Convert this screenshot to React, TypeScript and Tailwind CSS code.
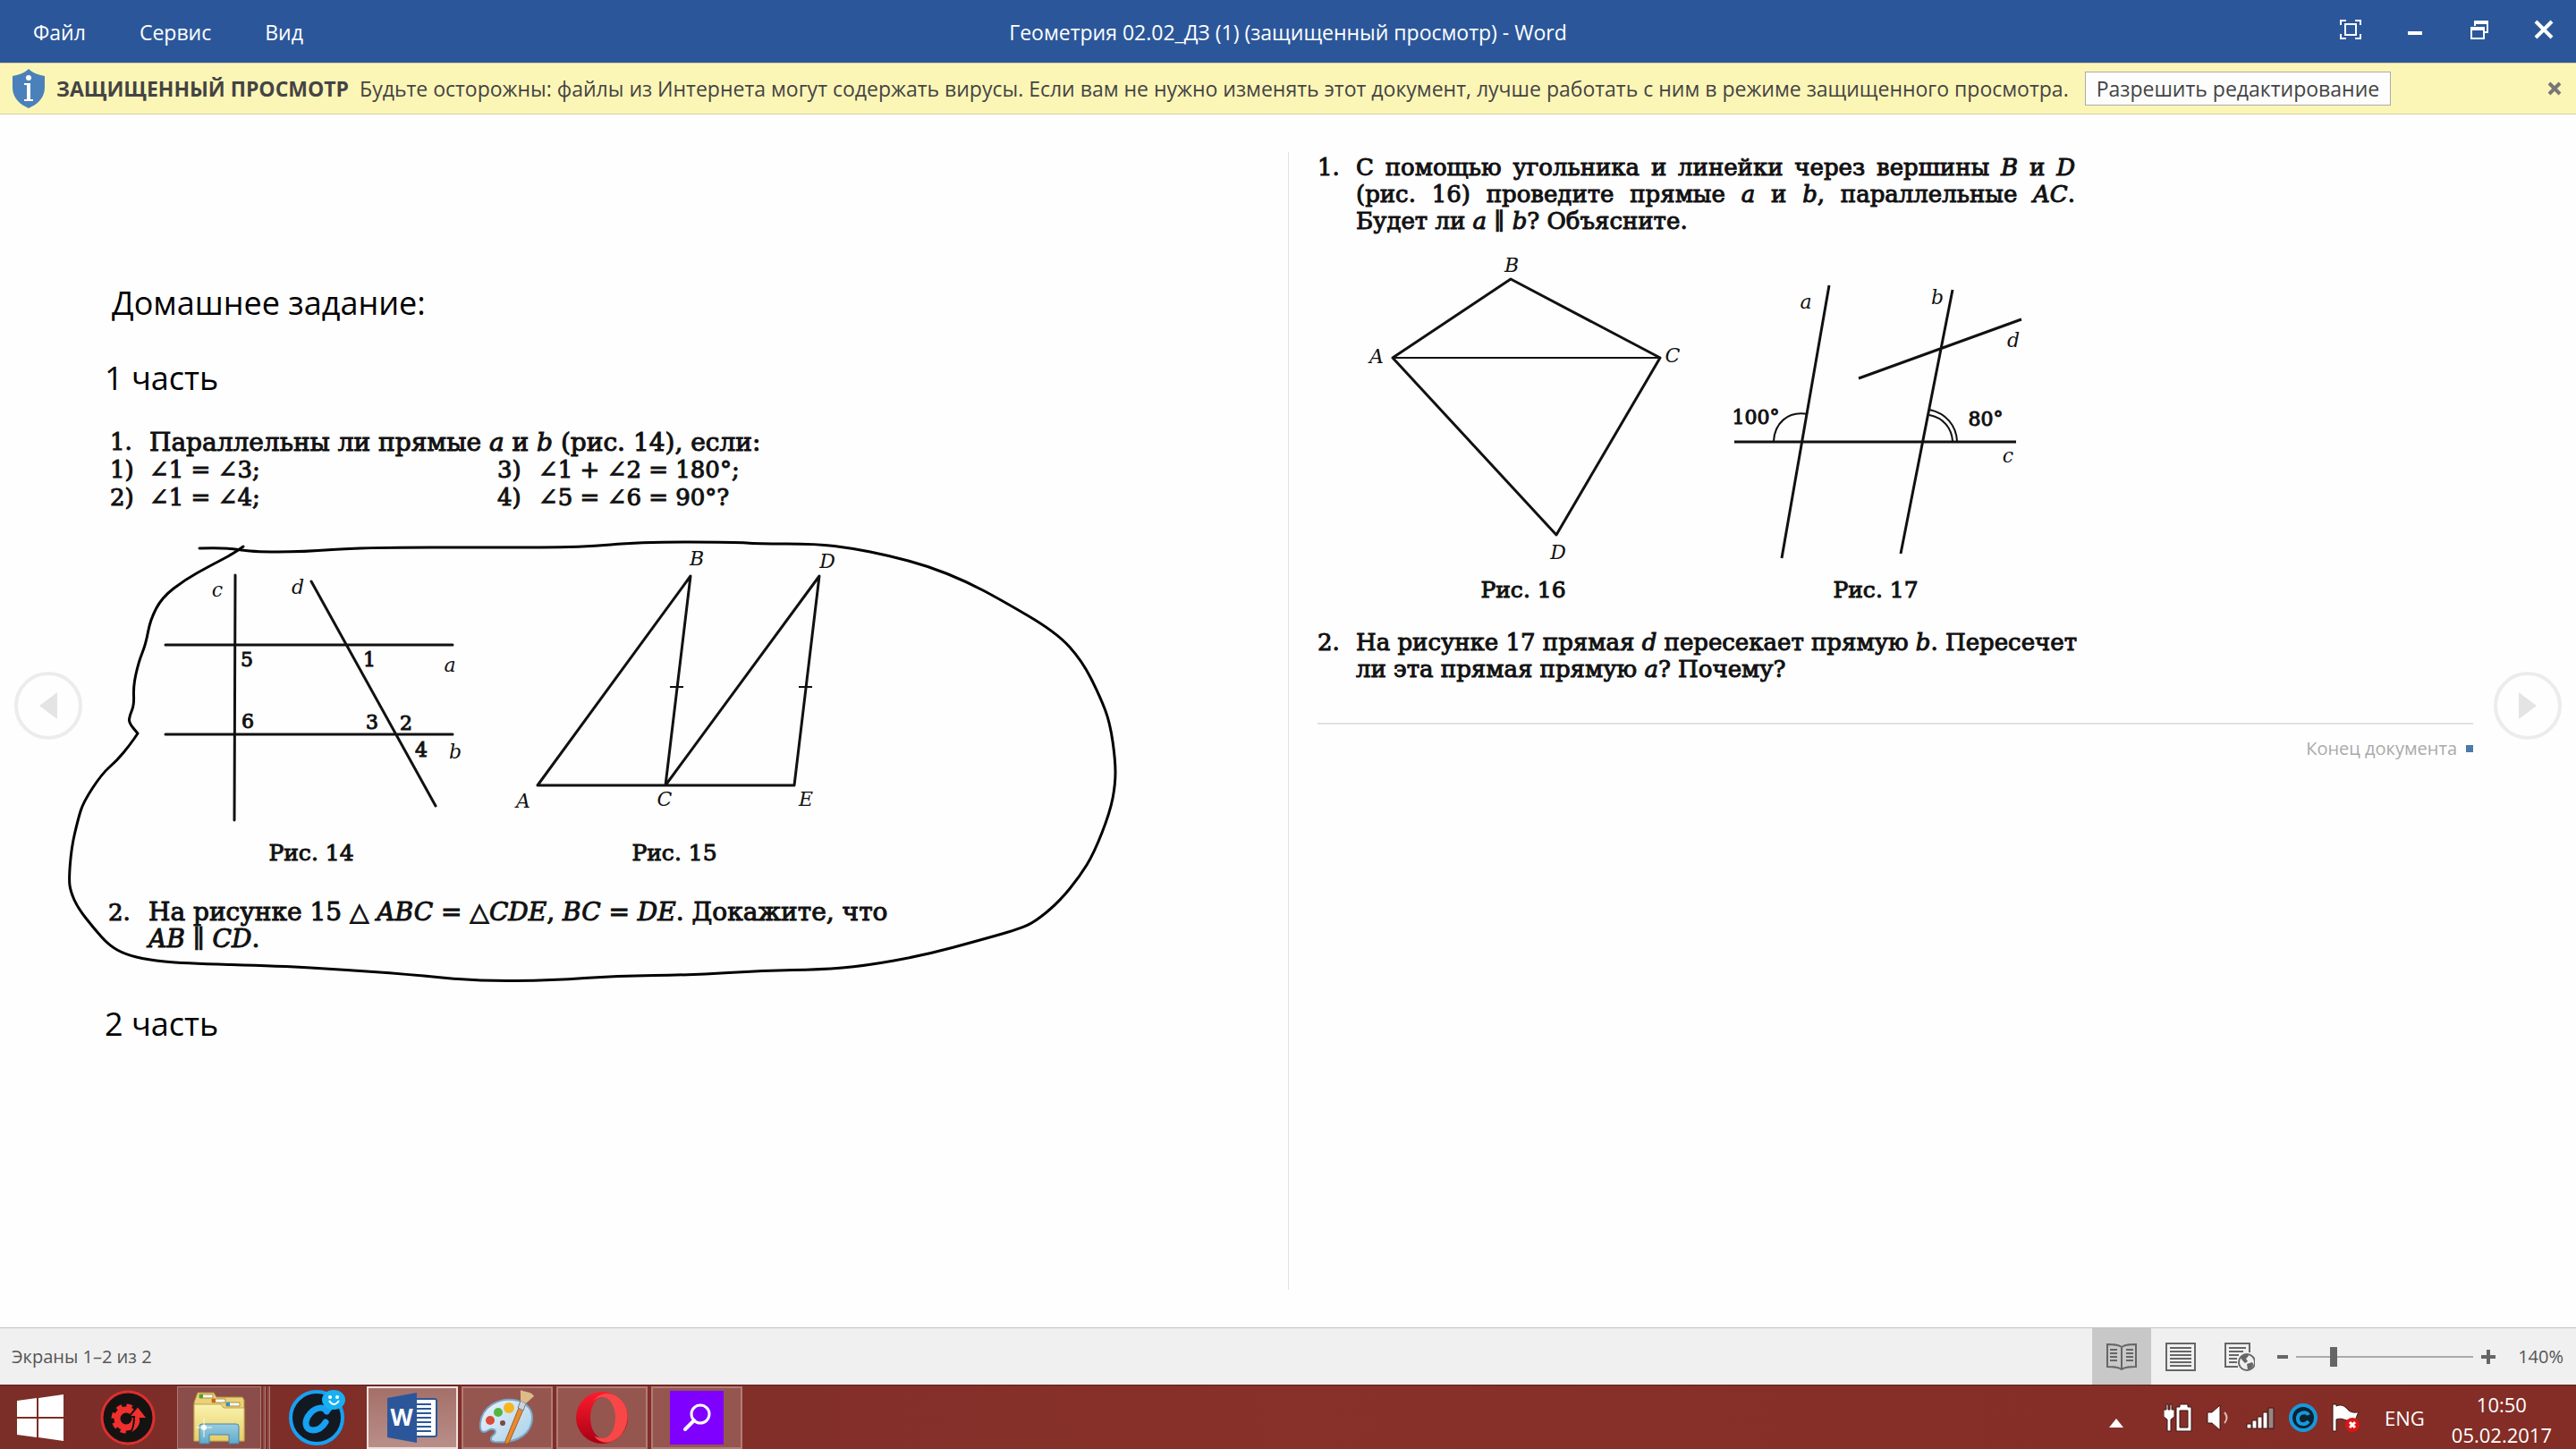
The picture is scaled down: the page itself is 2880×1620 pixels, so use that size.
import type { ReactNode } from "react";

type Point = [number, number];

interface LabelProps {
  x: number;
  y: number;
  children: ReactNode;
  upright?: boolean;
}

const MENU = ["Файл", "Сервис", "Вид"];

// outline drawn by hand over the first page
const INK: Point[] = [
  [223, 613], [252, 612], [281, 617], [339, 617], [404, 612], [560, 612], [649, 612], [716, 606],
  [823, 606], [846, 608], [913, 608], [953, 613], [993, 621], [1038, 633], [1080, 650], [1118, 670],
  [1181, 707], [1210, 739], [1230, 779], [1241, 808], [1247, 850], [1247, 877], [1241, 908],
  [1223, 954], [1207, 980], [1185, 1007], [1163, 1026], [1145, 1037], [1096, 1051], [1033, 1068],
  [966, 1080], [917, 1084], [855, 1085], [774, 1090], [689, 1091], [618, 1096], [535, 1097],
  [453, 1089], [381, 1084], [314, 1080], [203, 1077], [165, 1073], [140, 1067], [122, 1057],
  [105, 1038], [87, 1015], [79, 997], [77, 983], [80, 947], [87, 917], [93, 897], [114, 865],
  [131, 850], [145, 833], [154, 820], [154, 820], [144, 808], [145, 800], [150, 788], [149, 767],
  [155, 740], [163, 720], [168, 693], [181, 668], [207, 648], [234, 633], [259, 620], [272, 611],
];

// rounds the corners by running through the middle of each segment
function inkPath(points: Point[]) {
  let d = `M${points[0].join(" ")}`;
  for (let i = 1; i < points.length - 1; i++) {
    const [x, y] = points[i];
    const [nx, ny] = points[i + 1];
    d += `Q${x} ${y} ${(x + nx) / 2} ${(y + ny) / 2}`;
  }
  return `${d}L${points[points.length - 1].join(" ")}`;
}

function Label({ x, y, children, upright }: LabelProps) {
  return (
    <text
      x={x}
      y={y}
      textAnchor="middle"
      stroke={upright ? "#111" : "none"}
      strokeWidth="1"
      className={`fill-[#111] font-['DejaVu_Serif',serif] text-[22px] ${upright ? "" : "italic"}`}
    >
      {children}
    </text>
  );
}

function Figure({ caption, children }: { caption: string; children: ReactNode }) {
  return (
    <figure className="flex flex-col items-center">
      {children}
      <figcaption className="text-[25px] leading-[30px] [-webkit-text-stroke:1px]">{caption}</figcaption>
    </figure>
  );
}

function Figure14() {
  return (
    <svg width="360" height="330" viewBox="168 609 360 330" stroke="#111" strokeWidth="3" fill="none" strokeLinecap="round">
      <path d="M263 643 262 917M185 721H506M185 821H506M348 650 487 901" />
      <Label x={243} y={667}>c</Label>
      <Label x={333} y={664}>d</Label>
      <Label x={503} y={751}>a</Label>
      <Label x={509} y={848}>b</Label>
      <Label x={276} y={745} upright>5</Label>
      <Label x={413} y={745} upright>1</Label>
      <Label x={277} y={814} upright>6</Label>
      <Label x={416} y={815} upright>3</Label>
      <Label x={454} y={816} upright>2</Label>
      <Label x={471} y={846} upright>4</Label>
    </svg>
  );
}

function Figure15() {
  return (
    <svg width="372" height="330" viewBox="568 609 372 330" stroke="#111" strokeWidth="3" fill="none" strokeLinejoin="round">
      <path d="M744 878 772 644 601 878H888L916 644 744 878" />
      <path d="M749 768H764M893 768H908" strokeWidth="2" />
      <Label x={779} y={632}>B</Label>
      <Label x={925} y={635}>D</Label>
      <Label x={585} y={903}>A</Label>
      <Label x={743} y={901}>C</Label>
      <Label x={901} y={901}>E</Label>
    </svg>
  );
}

function Figure16() {
  return (
    <svg width="360" height="365" viewBox="1523 280 360 365" stroke="#111" strokeWidth="3" fill="none" strokeLinejoin="round">
      <path d="M1557 400 1689 312 1856 400 1740 598Z" />
      <path d="M1557 400H1856" strokeWidth="2" />
      <Label x={1690} y={304}>B</Label>
      <Label x={1539} y={406}>A</Label>
      <Label x={1870} y={405}>C</Label>
      <Label x={1742} y={625}>D</Label>
    </svg>
  );
}

function Figure17() {
  return (
    <svg width="340" height="365" viewBox="1927 280 340 365" stroke="#111" strokeWidth="3" fill="none">
      <path d="M2045 319 1992 624M2183 324 2125 619M2078 423 2260 357M1939 494H2254" />
      <path d="M1983 493C1984 474 1998 459 2021 463M2157 458C2176 462 2187 476 2188 493M2157 464C2173 467 2182 479 2183 493" strokeWidth="2" />
      <Label x={2019} y={345}>a</Label>
      <Label x={2166} y={340}>b</Label>
      <Label x={2251} y={388}>d</Label>
      <Label x={2245} y={517}>c</Label>
      <Label x={1963} y={474} upright>100°</Label>
      <Label x={2220} y={476} upright>80°</Label>
    </svg>
  );
}

function TitleBar() {
  return (
    <header className="grid h-[70px] grid-cols-[1fr_auto_1fr] items-center bg-[#2b579a] text-[23px] leading-[30px] text-white">
      <nav className="flex gap-[60px] pl-[37px] pt-[2px]">
        {MENU.map((m) => (
          <button key={m}>{m}</button>
        ))}
      </nav>
      <h1 className="pt-[2px]">Геометрия 02.02_ДЗ (1) (защищенный просмотр) - Word</h1>
      <div className="flex items-center justify-end gap-12 pb-1 pr-6">
        <button aria-label="Во весь экран">
          <svg width="24" height="22" viewBox="0 0 24 22" fill="none" stroke="white" strokeWidth="2">
            <path d="M1 6V1H7M17 1H23V6M23 16V21H17M7 21H1V16" />
            <rect x="6" y="5" width="12" height="12" />
          </svg>
        </button>
        <button aria-label="Свернуть">
          <svg width="24" height="22" viewBox="0 0 24 22" fill="white">
            <path d="M4 13H20V17H4z" />
          </svg>
        </button>
        <button aria-label="Восстановить">
          <svg width="24" height="22" viewBox="0 0 24 22" fill="none" stroke="white" strokeWidth="2">
            <path d="M7 7V2H21V14H17" />
            <path d="M6 3H22" strokeWidth="4" />
            <rect x="3" y="9" width="14" height="12" />
            <path d="M2 10H18" strokeWidth="4" />
          </svg>
        </button>
        <button aria-label="Закрыть">
          <svg width="24" height="22" viewBox="0 0 24 22" stroke="white" strokeWidth="4">
            <path d="M3 2 21 20M21 2 3 20" />
          </svg>
        </button>
      </div>
    </header>
  );
}

function ProtectedBar() {
  return (
    <div className="flex h-[58px] items-center border-y border-[#d3cfa0] bg-[#fcf6b6] pl-[13px] pr-4 text-[23px] leading-[30px] text-[#444]">
      <svg width="38" height="44" viewBox="0 0 38 44">
        <path d="M19 0C24 5 31 7 37 8V21C37 33 28 40 19 44 10 40 1 33 1 21V8C7 7 14 5 19 0Z" fill="#4b81ba" />
        <circle cx="19" cy="10" r="3" fill="white" />
        <path d="M14 16H21V34H24V36H14V34H17V18H14Z" fill="white" />
      </svg>
      <strong className="ml-3 whitespace-nowrap">ЗАЩИЩЕННЫЙ ПРОСМОТР</strong>
      <span className="ml-3 whitespace-nowrap">
        Будьте осторожны: файлы из Интернета могут содержать вирусы. Если вам не нужно изменять этот документ, лучше работать с ним в режиме защищенного просмотра.
      </span>
      <button className="ml-[18px] h-[38px] whitespace-nowrap border border-[#ababab] bg-[#fdfdfd] px-3">Разрешить редактирование</button>
      <button aria-label="Закрыть" className="ml-auto">
        <svg width="16" height="16" viewBox="0 0 16 16" stroke="#777" strokeWidth="4">
          <path d="M2 2 14 14M14 2 2 14" />
        </svg>
      </button>
    </div>
  );
}

function LeftPage() {
  return (
    <section className="relative pt-[187px] text-[28px] leading-[30px]">
      <h2 className="pl-[125px] font-['Open_Sans',sans-serif] text-[36px] leading-[48px] text-black">Домашнее задание:</h2>
      <h3 className="mt-9 pl-[117px] font-['Open_Sans',sans-serif] text-[36px] leading-[48px] text-black">1 часть</h3>
      <div className="mt-8 grid grid-cols-[44px_389px_46px_1fr] pl-[123px] text-[26px] leading-[31px] [-webkit-text-stroke:1px]">
        <span>1.</span>
        <p className="col-span-3 text-[28px]">
          Параллельны ли прямые <i>a</i> и <i>b</i> (рис. 14), если:
        </p>
        <span>1)</span>
        <span>∠1 = ∠3;</span>
        <span>3)</span>
        <span>∠1 + ∠2 = 180°;</span>
        <span>2)</span>
        <span>∠1 = ∠4;</span>
        <span>4)</span>
        <span>∠5 = ∠6 = 90°?</span>
      </div>
      <div className="mt-[37px] flex gap-10 pl-[168px]">
        <Figure caption="Рис. 14">
          <Figure14 />
        </Figure>
        <Figure caption="Рис. 15">
          <Figure15 />
        </Figure>
      </div>
      <div className="mt-9 flex pl-[121px] [-webkit-text-stroke:1px]">
        <span className="w-[45px] text-[26px]">2.</span>
        <p>
          На рисунке 15 △ <i>ABC</i> = △<i>CDE</i>, <i>BC</i> = <i>DE</i>. Докажите, что
          <br />
          <i>AB</i> ∥ <i>CD</i>.
        </p>
      </div>
      <h3 className="mt-14 pl-[117px] font-['Open_Sans',sans-serif] text-[36px] leading-[48px] text-black">2 часть</h3>
      <svg className="pointer-events-none absolute left-0 top-0" width="1300" height="1000" viewBox="0 128 1300 1000">
        <path d={inkPath(INK)} fill="none" stroke="black" strokeWidth="3" strokeLinejoin="round" strokeLinecap="round" />
      </svg>
    </section>
  );
}

function RightPage() {
  return (
    <section className="my-[42px] border-l border-[#e1e1e1] pl-8 pr-[115px] pt-[2px] text-[26px] leading-[30px]">
      <div className="flex [-webkit-text-stroke:1px]">
        <span className="w-[43px]">1.</span>
        <p className="w-[804px] whitespace-nowrap">
          <span className="block [text-align-last:justify]">
            С помощью угольника и линейки через вершины <i>B</i> и <i>D</i>
          </span>
          <span className="block [text-align-last:justify]">
            (рис. 16) проведите прямые <i>a</i> и <i>b</i>, параллельные <i>AC</i>.
          </span>
          <span className="block">
            Будет ли <i>a</i> ∥ <i>b</i>? Объясните.
          </span>
        </p>
      </div>
      <div className="mt-[18px] flex gap-11 pl-[50px]">
        <Figure caption="Рис. 16">
          <Figure16 />
        </Figure>
        <Figure caption="Рис. 17">
          <Figure17 />
        </Figure>
      </div>
      <div className="mt-[28px] flex [-webkit-text-stroke:1px]">
        <span className="w-[43px]">2.</span>
        <p className="w-[804px] whitespace-nowrap">
          <span className="block [text-align-last:justify]">
            На рисунке 17 прямая <i>d</i> пересекает прямую <i>b</i>. Пересечет
          </span>
          <span className="block">
            ли эта прямая прямую <i>a</i>? Почему?
          </span>
        </p>
      </div>
      <div className="mt-[45px] flex items-center justify-end gap-[10px] border-t-2 border-[#e1e1e1] pt-3 font-['Open_Sans',sans-serif] text-[20px] leading-[30px] text-[#aaa]">
        Конец документа
        <span className="size-2 bg-[#4a7ba9]" />
      </div>
    </section>
  );
}

function PageButton({ side }: { side: "left" | "right" }) {
  return (
    <button
      aria-label={side === "left" ? "Назад" : "Вперед"}
      className={`absolute top-[623px] flex size-[76px] items-center justify-center rounded-full border-4 border-[#ececec] ${
        side === "left" ? "left-4" : "right-4"
      }`}
    >
      <svg width="20" height="30" viewBox="0 0 20 30" fill="#e4e4e4">
        <path d={side === "left" ? "M20 0V30L0 15Z" : "M0 0V30L20 15Z"} />
      </svg>
    </button>
  );
}

function StatusBar() {
  return (
    <div className="flex h-16 items-center border-t border-[#c0c0c0] bg-[#f0f0f0] pl-[13px] text-[20px] leading-[30px] text-[#555]">
      <span>Экраны 1–2 из 2</span>
      <button aria-label="Режим чтения" className="ml-auto flex h-full w-[66px] items-center justify-center bg-[#c8c8c8]">
        <svg width="34" height="30" viewBox="0 0 34 30" fill="none" stroke="#666" strokeWidth="2">
          <path d="M17 4C13 1 8 1 1 1V26C8 26 13 26 17 29 21 26 26 26 33 26V1C26 1 21 1 17 4V29M4 7H12M4 11H12M4 15H12M4 19H12M22 7H30M22 11H30M22 15H30M22 19H30" />
        </svg>
      </button>
      <button aria-label="Разметка страницы" className="flex h-full w-[66px] items-center justify-center">
        <svg width="34" height="32" viewBox="0 0 34 32" fill="none" stroke="#666" strokeWidth="2">
          <path d="M1 1H33V31H1ZM5 6H29M5 10H29M5 14H29M5 18H29M5 22H29M5 26H29" />
        </svg>
      </button>
      <button aria-label="Веб-документ" className="flex h-full w-[66px] items-center justify-center">
        <svg width="34" height="32" viewBox="0 0 34 32" fill="none" stroke="#666" strokeWidth="2">
          <path d="M15 27H1V1H28V11M5 6H24M5 10H21M5 14H16M5 18H14M5 22H14" />
          <circle cx="25" cy="22" r="9" fill="#f0f0f0" />
          <path d="M18 17C21 12 26 13 27 15L24 18 26 21 23 23 20 20ZM25 24 31 22C34 25 30 30 26 30Z" fill="#666" stroke="none" />
        </svg>
      </button>
      <button aria-label="Уменьшить" className="ml-[9px]">
        <svg width="12" height="16" viewBox="0 0 12 16" fill="#666">
          <path d="M0 6H12V10H0z" />
        </svg>
      </button>
      <input
        type="range"
        aria-label="Масштаб"
        min={0}
        max={100}
        defaultValue={20}
        className="mx-[9px] h-6 w-[198px] appearance-none bg-transparent [&::-webkit-slider-runnable-track]:h-0.5 [&::-webkit-slider-runnable-track]:bg-[#aaa] [&::-webkit-slider-thumb]:-mt-[10px] [&::-webkit-slider-thumb]:h-[22px] [&::-webkit-slider-thumb]:w-2 [&::-webkit-slider-thumb]:appearance-none [&::-webkit-slider-thumb]:bg-[#666]"
      />
      <button aria-label="Увеличить">
        <svg width="16" height="16" viewBox="0 0 16 16" fill="#666">
          <path d="M6 0H10V6H16V10H10V16H6V10H0V6H6z" />
        </svg>
      </button>
      <span className="w-[90px] pr-[14px] text-right">140%</span>
    </div>
  );
}

function TaskButton({ label, active, children }: { label: string; active?: boolean; children: ReactNode }) {
  return (
    <button
      aria-label={label}
      className={`flex h-[70px] w-[102px] items-center justify-center border-2 ${
        active ? "border-[#f0e0de] bg-linear-to-b from-[#a47069] to-[#b98e89]" : "border-[#b27c76] bg-[#955650]"
      }`}
    >
      {children}
    </button>
  );
}

function TaskBar() {
  return (
    <footer className="flex h-[72px] items-center border-t border-[#5f1f1a] bg-linear-to-r from-[#7b2d27] via-[#88302a] to-[#832d26] text-[22px] leading-[34px] text-white">
      <button aria-label="Пуск" className="ml-[19px]">
        <svg width="52" height="52" viewBox="0 0 52 52" fill="white">
          <path d="M0 7 22 4V25H0ZM24 4 52 0V25H24ZM0 27H22V48L0 45ZM24 27H52V52L24 48Z" />
        </svg>
      </button>
      <button aria-label="Driver Booster" className="ml-[41px]">
        <svg width="62" height="62" viewBox="0 0 62 62">
          <circle cx="31" cy="31" r="29" fill="#151312" stroke="#dc2f2f" strokeWidth="3" />
          <circle cx="29" cy="32" r="10" fill="none" stroke="#f0302c" strokeWidth="7" />
          <circle cx="29" cy="32" r="14" fill="none" stroke="#f0302c" strokeWidth="5" strokeDasharray="6 5" />
          <path d="M32 50C42 45 46 39 45 32H53L42 18 32 30H38C38 40 36 46 32 50Z" fill="#f0302c" stroke="#151312" strokeWidth="2" />
          <path d="M33 29A5 5 0 1 0 33 35" fill="none" stroke="#151312" strokeWidth="2" />
        </svg>
      </button>
      <div className="ml-6 flex gap-[2px]">
        <button aria-label="Проводник" className="flex h-[70px] w-[94px] items-center justify-center border border-[#b27c76] bg-[#8b4d49]">
          <svg width="58" height="60" viewBox="0 0 58 60">
            <defs>
              <linearGradient id="folder" x1="0" y1="0" x2="0" y2="1">
                <stop offset="0" stopColor="#faf3ae" />
                <stop offset="1" stopColor="#e5cd69" />
              </linearGradient>
              <linearGradient id="stand" x1="0" y1="0" x2="0" y2="1">
                <stop offset="0" stopColor="#9bcde0" />
                <stop offset="1" stopColor="#5fa9cf" />
              </linearGradient>
            </defs>
            <path d="M2 10 5 2H23L26 7H55L57 10V56H1V13Z" fill="#e9d279" stroke="#ad8d3d" />
            <path d="M7 4H22V8H7ZM21 9H36V13H21Z" fill="white" stroke="#ad8d3d" />
            <path d="M7 4H11V8H7Z" fill="#48a82b" />
            <path d="M21 9H25V13H21Z" fill="#d1651b" />
            <path d="M1 15H31L34 19H57V56H1Z" fill="url(#folder)" stroke="#c2a452" />
            <path d="M37 13H52V17H37Z" fill="white" stroke="#ad8d3d" />
            <path d="M37 13H41V17H37Z" fill="#3292c8" />
            <path d="M7 59V40Q7 37 10 37H48Q51 37 51 40V59H40V49H18V59Z" fill="url(#stand)" stroke="#4586a8" />
            <path d="M3 41H21M12 31V52" stroke="#fffbe0" />
            <circle cx="12" cy="41" r="3" fill="white" />
          </svg>
        </button>
        <span className="h-[70px] w-[3px] border-r border-[#b27c76] bg-[#8b4d49]" />
        <span className="h-[70px] w-[3px] border-r border-[#b27c76] bg-[#8b4d49]" />
      </div>
      <button aria-label="Advanced SystemCare" className="ml-5 mr-6">
        <svg width="64" height="62" viewBox="0 0 64 62">
          <circle cx="32" cy="31" r="29" fill="#131920" stroke="#17a1f3" strokeWidth="4" />
          <path d="M43 24C41 18 31 19 25 26 17 35 19 45 28 45 34 45 39 41 42 36" fill="none" stroke="#17a1f3" strokeWidth="7" strokeLinecap="round" />
          <path d="M41 20 44 28 51 20Z" fill="#17a1f3" />
          <ellipse cx="51" cy="11" rx="13" ry="11" fill="#17b0f3" />
          <path d="M46 12Q51 20 57 12" fill="none" stroke="white" strokeWidth="2" />
          <circle cx="47" cy="8" r="2" fill="white" />
          <circle cx="55" cy="8" r="2" fill="white" />
        </svg>
      </button>
      <div className="flex gap-1">
        <TaskButton label="Word" active>
          <svg width="56" height="56" viewBox="0 0 56 56">
            <rect x="30" y="7" width="25" height="42" rx="2" fill="white" stroke="#2b579a" strokeWidth="2" />
            <path d="M32 13H49M32 18H49M32 23H49M32 28H49M32 33H49M32 38H49M32 43H49" stroke="#2b579a" strokeWidth="2" />
            <path d="M0 6 33 0V56L0 50Z" fill="#2b579a" />
            <text x="16" y="37" textAnchor="middle" fill="white" className="font-['Open_Sans',sans-serif] text-[26px] font-bold">
              W
            </text>
          </svg>
        </TaskButton>
        <TaskButton label="Paint">
          <svg width="62" height="62" viewBox="0 0 62 62">
            <defs>
              <linearGradient id="palette" x1="0" y1="0" x2="1" y2="1">
                <stop offset="0" stopColor="#edf5fc" />
                <stop offset="1" stopColor="#a6cfe9" />
              </linearGradient>
            </defs>
            <path d="M1 37C3 18 22 9 38 11 54 13 62 24 58 38 54 52 38 60 17 58 11 57 12 53 17 49 20 45 15 42 10 45 4 49 0 47 1 37Z" fill="url(#palette)" stroke="#7aa5c6" strokeWidth="2" />
            <circle cx="12" cy="34" r="5" fill="#dc4b37" />
            <circle cx="21" cy="25" r="5" fill="#52b544" />
            <circle cx="33" cy="20" r="6" fill="#f5b522" />
            <circle cx="26" cy="37" r="3" fill="#7b4844" />
            <path d="M44 20 49 22 33 59Q28 62 29 57Z" fill="#e78b32" stroke="#a75c20" />
            <path d="M46 12 52 15 49 23 43 20Z" fill="#ccd3d7" stroke="#778" />
            <path d="M46 0C52 3 57 1 61 7L52 15 46 12Z" fill="#dcbb89" />
          </svg>
        </TaskButton>
        <TaskButton label="Opera">
          <svg width="60" height="60" viewBox="0 0 60 60">
            <defs>
              <linearGradient id="opera" x1="0" y1="0" x2="0" y2="1">
                <stop offset="0" stopColor="#ff1b2d" />
                <stop offset="1" stopColor="#a70014" />
              </linearGradient>
            </defs>
            <circle cx="30" cy="30" r="29" fill="url(#opera)" />
            <path d="M20 12C28 2 43 10 44 27 45 44 33 58 21 50 29 62 45 59 53 47 64 30 58 10 42 4 32 1 24 5 20 12Z" fill="#f94747" />
            <ellipse cx="31" cy="30" rx="14" ry="23" fill="#955650" />
          </svg>
        </TaskButton>
        <TaskButton label="Поиск">
          <svg width="60" height="60" viewBox="0 0 60 60" fill="none" stroke="white">
            <path d="M0 0H60V60H0Z" fill="#7f00ff" stroke="none" />
            <circle cx="34" cy="26" r="10" strokeWidth="3" />
            <path d="M27 33 17 43" strokeWidth="4" strokeLinecap="round" />
          </svg>
        </TaskButton>
      </div>
      <div className="ml-auto flex items-center">
        <button aria-label="Скрытые значки" className="mr-[45px] pt-3">
          <svg width="16" height="10" viewBox="0 0 16 10" fill="white">
            <path d="M8 0 16 10H0Z" />
          </svg>
        </button>
        <div className="flex items-center gap-4">
          <svg width="32" height="32" viewBox="0 0 32 32" stroke="#3d1512">
            <path d="M3 1V7H0V15L4 18V31H8V18L12 15V7H9V1H7V7H5V1Z" fill="white" />
            <path d="M14 4H18V1H27V4H31V31H14Z" fill="white" />
            <path d="M18 8H27V27H18Z" fill="#842e27" />
          </svg>
          <svg width="28" height="32" viewBox="0 0 28 32">
            <path d="M1 10H6L15 2V30L6 22H1Z" fill="white" stroke="#3d1512" />
            <path d="M20 10Q25 16 20 22" fill="none" stroke="#e0b5b1" strokeWidth="2" />
          </svg>
          <svg width="32" height="32" viewBox="0 0 32 32" stroke="#3d1512">
            <path d="M1 23H6V28H1ZM7 19H12V28H7ZM13 15H18V28H13ZM19 10H24V28H19Z" fill="white" />
            <path d="M25 5H31V28H25Z" fill="#9a8583" />
          </svg>
          <svg width="32" height="32" viewBox="0 0 32 32">
            <circle cx="16" cy="16" r="14" fill="#0c2230" stroke="#1798dc" strokeWidth="4" />
            <path d="M22 13C20 8 9 10 10 18 11 25 19 24 22 20" fill="none" stroke="#1798dc" strokeWidth="4" />
          </svg>
          <svg width="32" height="32" viewBox="0 0 32 32">
            <path d="M1 1H5V3C12 0 15 4 19 8 23 11 26 10 30 10 27 14 28 18 24 20 17 21 12 15 5 18V31H1Z" fill="white" stroke="#3d1512" />
            <circle cx="23" cy="24" r="8" fill="#dc1515" />
            <path d="M20 21 26 27M26 21 20 27" stroke="white" strokeWidth="3" />
          </svg>
        </div>
        <button className="ml-[27px]">ENG</button>
        <time className="ml-[30px] mr-[27px] pt-1 text-center" dateTime="2017-02-05T10:50">
          10:50
          <br />
          05.02.2017
        </time>
      </div>
    </footer>
  );
}

export default function App() {
  return (
    <div className="flex min-h-screen flex-col bg-[#fefefe] font-['Open_Sans',sans-serif]">
      <TitleBar />
      <ProtectedBar />
      <main className="relative grid flex-1 grid-cols-2 font-['DejaVu_Serif',serif] text-[#111]">
        <LeftPage />
        <RightPage />
        <PageButton side="left" />
        <PageButton side="right" />
      </main>
      <StatusBar />
      <TaskBar />
    </div>
  );
}
